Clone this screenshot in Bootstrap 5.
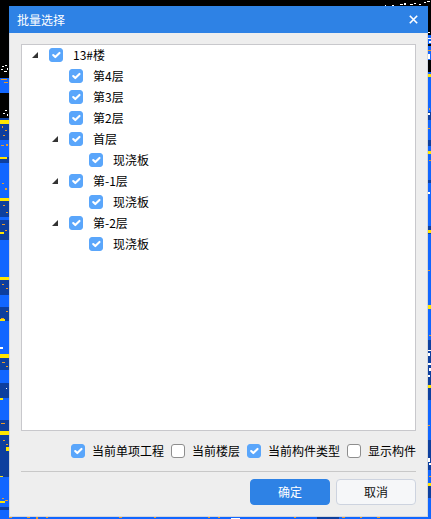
<!DOCTYPE html>
<html lang="zh">
<head>
<meta charset="utf-8">
<title>批量选择</title>
<link rel="stylesheet" href="https://cdn.jsdelivr.net/npm/bootstrap@5.3.0/dist/css/bootstrap.min.css">
<style>
html,body{height:519px;overflow:hidden;background:#000}
body{font-family:"Noto Sans CJK SC","Microsoft YaHei",sans-serif;font-size:12px;line-height:21px;color:#000}
.backdrop{position:absolute;left:0;top:0;width:431px;height:519px}
.dlg{position:relative;margin:6px 3px 0 9px;height:511px;background:#eee;border:solid #d3d7de;border-width:0 1px 1px 1px}
.dlg-title{height:27px;margin:0 -1px;padding:0 10px 0 8px;background:#2e82e5;color:#fff;line-height:27px}
.dlg-main{padding:11px 11px 0 11px}
.tree-panel{height:387px;background:#fff;border:1px solid #c8c8cc;overflow:hidden}
.tree-panel ul{list-style:none;margin:0;padding:0}
.tree-panel ul ul{padding-left:20px}
.node{height:21px;padding-left:10px}
.node span:last-child{line-height:19px}
.twist{width:17px;height:21px;flex:none}
.twist svg{display:block;margin-top:7px}
.form-check-input.cb{width:14px;height:14px;margin:3px 10px 0 0;flex:none;border-radius:3px;border:1px solid #8e8e8e;background-color:#fff;float:none}
.form-check-input.cb:checked{background-color:#5aa6fb;border-color:#5aa6fb;background-size:14px 14px}
.opts{height:40px;gap:7px}
.opts .cb{margin:0}
.opts label{margin:0 0 2px;line-height:19px}
.rule{height:1px;background:#c8c8c8}
.acts{gap:6px;padding-top:7px}
.acts .btn{width:80px;height:26px;padding:0;font-size:12px;line-height:24px;border-radius:4px}
.btn-ok{background:#2e82e5;border-color:#2e82e5;color:#fff}
.btn-no{background:#f6f7f9;border-color:#cdd3df;color:#111}
</style>
</head>
<body>
<svg class="backdrop" viewBox="0 0 431 519" shape-rendering="crispEdges" aria-hidden="true">
<rect width="431" height="519" fill="#1166ff"/>
<rect width="431" height="6" fill="#000"/>
<g fill="#000">
<rect x="0" y="6" width="9" height="72"/><rect x="0" y="93" width="9" height="25"/>
<rect x="428" y="6" width="3" height="27"/><rect x="428" y="33" width="3" height="2"/><rect x="428" y="44" width="3" height="2"/>
<rect x="428" y="60" width="3" height="12"/>
</g>
<g fill="#0d3f9e">
<rect x="0" y="118" width="9" height="22"/><rect x="0" y="157" width="9" height="6"/>
<rect x="0" y="198" width="9" height="19"/><rect x="0" y="220" width="9" height="20"/>
<rect x="0" y="277" width="9" height="18"/><rect x="0" y="307" width="9" height="14"/>
<rect x="0" y="355" width="9" height="15"/><rect x="0" y="383" width="9" height="15"/>
<rect x="0" y="420" width="9" height="57"/><rect x="0" y="507" width="9" height="3"/>
<rect x="428" y="112" width="3" height="8"/><rect x="428" y="140" width="3" height="6"/>
<rect x="428" y="180" width="3" height="3"/><rect x="428" y="226" width="3" height="8"/>
<rect x="428" y="340" width="3" height="60"/><rect x="428" y="440" width="3" height="30"/>
<rect x="428" y="486" width="3" height="12"/>
<rect x="317" y="517" width="22" height="2"/>
</g>
<g fill="#ffe600">
<rect x="0" y="120" width="9" height="4"/><rect x="0" y="157" width="7" height="2"/>
<rect x="0" y="198" width="9" height="3"/><rect x="0" y="232" width="4" height="2"/>
<rect x="0" y="277" width="9" height="3"/><rect x="0" y="319" width="5" height="2"/>
<rect x="0" y="354" width="9" height="4"/><rect x="0" y="398" width="3" height="2"/>
<rect x="0" y="431" width="9" height="4"/><rect x="6" y="447" width="3" height="4"/>
<rect x="0" y="476" width="3" height="1"/><rect x="0" y="501" width="5" height="2"/>
<rect x="428" y="74" width="3" height="3"/><rect x="428" y="151" width="3" height="3"/>
<rect x="428" y="230" width="3" height="3"/><rect x="428" y="305" width="3" height="4"/>
<rect x="428" y="385" width="3" height="3"/><rect x="428" y="483" width="3" height="3"/>
</g>
<g fill="#e89a2a">
<rect x="1" y="79" width="6" height="1"/><rect x="4" y="82" width="4" height="1"/>
<rect x="2" y="126" width="1" height="2"/><rect x="5" y="130" width="2" height="1"/><rect x="3" y="135" width="2" height="1"/>
<rect x="1" y="145" width="3" height="1"/><rect x="6" y="144" width="2" height="2"/>
<rect x="2" y="183" width="2" height="1"/><rect x="5" y="188" width="2" height="2"/>
<rect x="3" y="205" width="2" height="1"/><rect x="6" y="212" width="2" height="1"/>
<rect x="2" y="224" width="3" height="1"/><rect x="5" y="230" width="2" height="1"/>
<rect x="2" y="284" width="2" height="1"/><rect x="6" y="288" width="2" height="1"/>
<rect x="1" y="318" width="3" height="1"/><rect x="6" y="311" width="2" height="1"/>
<rect x="2" y="362" width="3" height="1"/><rect x="6" y="366" width="2" height="1"/>
<rect x="1" y="423" width="4" height="1"/><rect x="3" y="440" width="2" height="1"/><rect x="6" y="444" width="2" height="1"/>
<rect x="2" y="498" width="2" height="1"/><rect x="5" y="500" width="3" height="1"/>
<rect x="428" y="50" width="3" height="1"/><rect x="429" y="108" width="1" height="2"/>
<rect x="428" y="128" width="2" height="1"/><rect x="429" y="160" width="2" height="1"/>
<rect x="428" y="270" width="2" height="1"/><rect x="429" y="335" width="2" height="1"/>
<rect x="428" y="425" width="2" height="1"/><rect x="429" y="476" width="2" height="1"/>
<rect x="9" y="517" width="3" height="1"/><rect x="27" y="517" width="3" height="1"/><rect x="36" y="517" width="2" height="2"/>
<rect x="46" y="517" width="2" height="1"/><rect x="119" y="517" width="3" height="1"/><rect x="154" y="517" width="2" height="1"/>
<rect x="208" y="517" width="2" height="1"/><rect x="218" y="517" width="2" height="1"/><rect x="294" y="517" width="2" height="1"/>
<rect x="342" y="517" width="3" height="1"/><rect x="360" y="517" width="2" height="1"/><rect x="377" y="517" width="3" height="1"/>
</g>
<g fill="#fff">
<rect x="231" y="518" width="9" height="1"/>
<rect x="2" y="66" width="2" height="1"/><rect x="5" y="65" width="2" height="1"/><rect x="1" y="69" width="2" height="1"/><rect x="4" y="71" width="3" height="1"/><rect x="7" y="68" width="1" height="2"/>
<rect x="5" y="110" width="2" height="1"/><rect x="3" y="113" width="2" height="1"/><rect x="7" y="114" width="1" height="2"/>
<rect x="0" y="347" width="3" height="2"/><rect x="6" y="388" width="1" height="1"/>
<rect x="428" y="32" width="2" height="1"/><rect x="428" y="38" width="3" height="1"/><rect x="429" y="41" width="2" height="2"/>
<rect x="428" y="54" width="2" height="5"/><rect x="428" y="113" width="2" height="2"/>
<rect x="428" y="192" width="2" height="2"/><rect x="428" y="350" width="3" height="1"/><rect x="428" y="353" width="2" height="3"/><rect x="428" y="363" width="3" height="2"/><rect x="429" y="368" width="2" height="3"/><rect x="428" y="375" width="2" height="2"/>
<rect x="428" y="458" width="2" height="4"/><rect x="429" y="463" width="2" height="2"/>
<rect x="385" y="5" width="1" height="1"/><rect x="392" y="5" width="2" height="1"/><rect x="400" y="4" width="3" height="1"/><rect x="404" y="3" width="2" height="2"/><rect x="410" y="4" width="3" height="1"/><rect x="414" y="3" width="2" height="1"/><rect x="419" y="4" width="2" height="1"/><rect x="424" y="2" width="2" height="1"/><rect x="427" y="1" width="3" height="1"/>
</g>
</svg>

<div class="dlg d-flex flex-column">
  <div class="dlg-title d-flex justify-content-between align-items-center">
    <span>批量选择</span>
    <svg width="9" height="9" viewBox="0 0 9 9" fill="none" stroke="#fff" stroke-width="1.6"><path d="M.8.8l7.4 7.4M8.2.8L.8 8.2"/></svg>
  </div>
  <div class="dlg-main">
    <div class="tree-panel">
      <ul>
        <li>
          <div class="node d-flex"><span class="twist"><svg width="6" height="6" viewBox="0 0 6 6"><path d="M6 0v6H0z" fill="#333"/></svg></span><input class="form-check-input cb" type="checkbox" checked><span>13#楼</span></div>
          <ul>
            <li><div class="node d-flex"><span class="twist"></span><input class="form-check-input cb" type="checkbox" checked><span>第4层</span></div></li>
            <li><div class="node d-flex"><span class="twist"></span><input class="form-check-input cb" type="checkbox" checked><span>第3层</span></div></li>
            <li><div class="node d-flex"><span class="twist"></span><input class="form-check-input cb" type="checkbox" checked><span>第2层</span></div></li>
            <li>
              <div class="node d-flex"><span class="twist"><svg width="6" height="6" viewBox="0 0 6 6"><path d="M6 0v6H0z" fill="#333"/></svg></span><input class="form-check-input cb" type="checkbox" checked><span>首层</span></div>
              <ul><li><div class="node d-flex"><span class="twist"></span><input class="form-check-input cb" type="checkbox" checked><span>现浇板</span></div></li></ul>
            </li>
            <li>
              <div class="node d-flex"><span class="twist"><svg width="6" height="6" viewBox="0 0 6 6"><path d="M6 0v6H0z" fill="#333"/></svg></span><input class="form-check-input cb" type="checkbox" checked><span>第-1层</span></div>
              <ul><li><div class="node d-flex"><span class="twist"></span><input class="form-check-input cb" type="checkbox" checked><span>现浇板</span></div></li></ul>
            </li>
            <li>
              <div class="node d-flex"><span class="twist"><svg width="6" height="6" viewBox="0 0 6 6"><path d="M6 0v6H0z" fill="#333"/></svg></span><input class="form-check-input cb" type="checkbox" checked><span>第-2层</span></div>
              <ul><li><div class="node d-flex"><span class="twist"></span><input class="form-check-input cb" type="checkbox" checked><span>现浇板</span></div></li></ul>
            </li>
          </ul>
        </li>
      </ul>
    </div>
    <div class="opts d-flex justify-content-end align-items-center">
      <input class="form-check-input cb" type="checkbox" id="o1" checked><label for="o1">当前单项工程</label>
      <input class="form-check-input cb" type="checkbox" id="o2"><label for="o2">当前楼层</label>
      <input class="form-check-input cb" type="checkbox" id="o3" checked><label for="o3">当前构件类型</label>
      <input class="form-check-input cb" type="checkbox" id="o4"><label for="o4">显示构件</label>
    </div>
    <div class="rule"></div>
    <div class="acts d-flex justify-content-end">
      <button type="button" class="btn btn-ok">确定</button>
      <button type="button" class="btn btn-no">取消</button>
    </div>
  </div>
</div>
<script src="https://cdn.jsdelivr.net/npm/bootstrap@5.3.0/dist/js/bootstrap.bundle.min.js"></script>
</body>
</html>
